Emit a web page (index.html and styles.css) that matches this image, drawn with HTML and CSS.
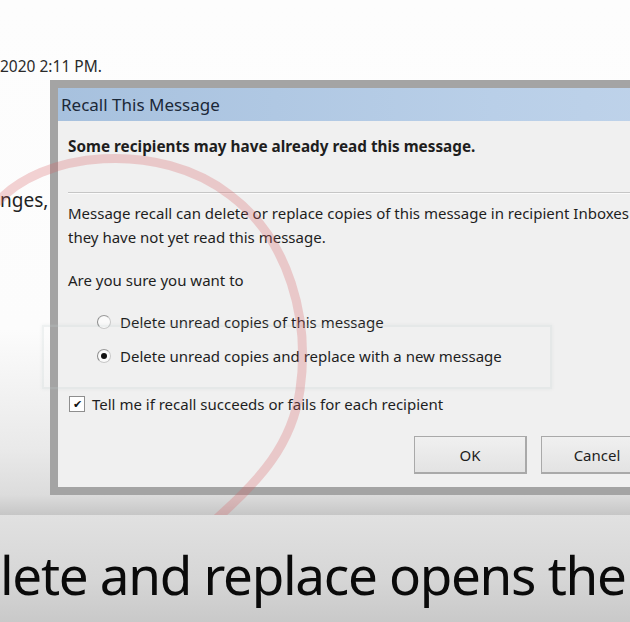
FILE: index.html
```html
<!DOCTYPE html>
<html lang="en">
<head>
    <meta charset="UTF-8">
    <title>Recall This Message</title>
    <link rel="stylesheet" href="styles.css">
</head>
<body>
    <div class="screen">
        <div class="mail">
            <p class="mail-date">2020 2:11 PM.</p>
            <p class="mail-line">nges,</p>
        </div>

        <div class="dialog">
            <div class="dialog-title">Recall This Message</div>
            <div class="dialog-body">
                <p class="warn">Some recipients may have already read this message.</p>
                <hr class="sep">
                <p class="info">Message recall can delete or replace copies of this message in recipient Inboxes<br>they have not yet read this message.</p>
                <p class="ask">Are you sure you want to</p>
                <div class="options">
                    <label class="option"><span class="radio"></span>Delete unread copies of this message</label>
                    <label class="option"><span class="radio checked"></span>Delete unread copies and replace with a new message</label>
                </div>
                <label class="check-row"><span class="checkbox">&#10004;</span>Tell me if recall succeeds or fails for each recipient</label>
                <div class="buttons">
                    <button class="btn">OK</button>
                    <button class="btn">Cancel</button>
                </div>
            </div>
        </div>

        <div class="ghost-box"></div>

        <svg class="marker" viewBox="0 0 630 515" width="630" height="515">
            <path d="M -5 205 C 40 150, 160 140, 230 195 C 290 240, 310 320, 300 390 C 292 445, 260 480, 215 520" fill="none" stroke="rgba(214, 96, 100, 0.28)" stroke-width="9" stroke-linecap="round"/>
        </svg>
    </div>

    <div class="caption">lete and replace opens the</div>
</body>
</html>
```

FILE: styles.css
```css
body { margin: 0; width: 630px; height: 622px; overflow: hidden; font-family: 'Noto Sans', 'Open Sans', sans-serif; color: #1e1e1e; }

/* fondo del correo */
.screen { position: relative; height: 515px; overflow: hidden; background: linear-gradient(#fdfdfd 0, #fcfcfc 330px, #e9e9e9 450px, #dcdcdc 495px, #c6c6c6 515px); }
.mail { padding-top: 55px; }
.mail p { margin: 0; }
.mail-date { font-size: 15.5px; color: #2a2a2a; line-height: 22px; }
.mail-line { font-size: 19px; line-height: 26px; margin-top: 110px !important; color: #222; }

/* ventana del dialogo */
.dialog { position: absolute; left: 50px; top: 80px; width: 620px; border: 8px solid #a4a4a4; background: #f0f0f0; }
.dialog-title { height: 33px; line-height: 33px; padding-left: 3px; font-size: 17px; color: #1b2838; background: linear-gradient(to right, #a7c1de, #b9cfe8 70%, #bfd3ea); }
.dialog-body { padding: 15px 0 13px 10px; font-size: 15px; }
.dialog-body p { margin: 0; }
.warn { font-weight: bold; font-size: 15.3px; line-height: 20px; }
.sep { margin: 36px 0 0 0; border: none; border-top: 1px solid #c6c6c6; border-bottom: 1px solid #fbfbfb; }
.info { line-height: 24px; margin-top: 7px !important; white-space: nowrap; }
.ask { line-height: 24px; margin-top: 19px !important; }

.options { padding-left: 30px; margin-top: 18px; display: flex; flex-direction: column; gap: 10px; }
.option { display: flex; align-items: center; gap: 9px; height: 24px; }
.radio { width: 12px; height: 12px; border-radius: 50%; background: #fafafa; border: 1px solid #c8c8c8; border-left-color: #8a8a8a; border-top-color: #9a9a9a; position: relative; margin-left: -1px; }
.radio.checked::after { content: ''; position: absolute; left: 3px; top: 3px; width: 6px; height: 6px; border-radius: 50%; background: #111; }

.check-row { display: flex; align-items: center; gap: 7px; height: 24px; margin-top: 24px; margin-left: 1px; }
.checkbox { width: 14px; height: 14px; border: 1px solid #8e8e8e; background: #fff; font-size: 11px; line-height: 14px; text-align: center; color: #111; }

.buttons { display: flex; gap: 14px; margin-top: 20px; padding-left: 346px; }
.btn { width: 113px; height: 38px; font-family: inherit; font-size: 15px; color: #1e1e1e; background: linear-gradient(#f0f0f0, #e3e3e3); border: 1px solid #a9a9a9; border-right-width: 2px; border-bottom-width: 2px; padding: 0; }

/* restos del cuadro anterior del video */
.ghost-box { position: absolute; left: 42px; top: 325px; width: 506px; height: 60px; border: 2px solid rgba(190, 205, 205, 0.22); box-shadow: 0 0 3px rgba(190, 205, 205, 0.25); }

.marker { position: absolute; left: 0; top: 0; }

/* subtitulo */
.caption { height: 107px; box-sizing: border-box; padding-top: 10px; background: linear-gradient(#e1e1e1, #d6d6d6 60%, #c9c9c9); font-size: 53px; letter-spacing: -1.3px; line-height: 100px; white-space: nowrap; color: #0a0a0a; }
```
